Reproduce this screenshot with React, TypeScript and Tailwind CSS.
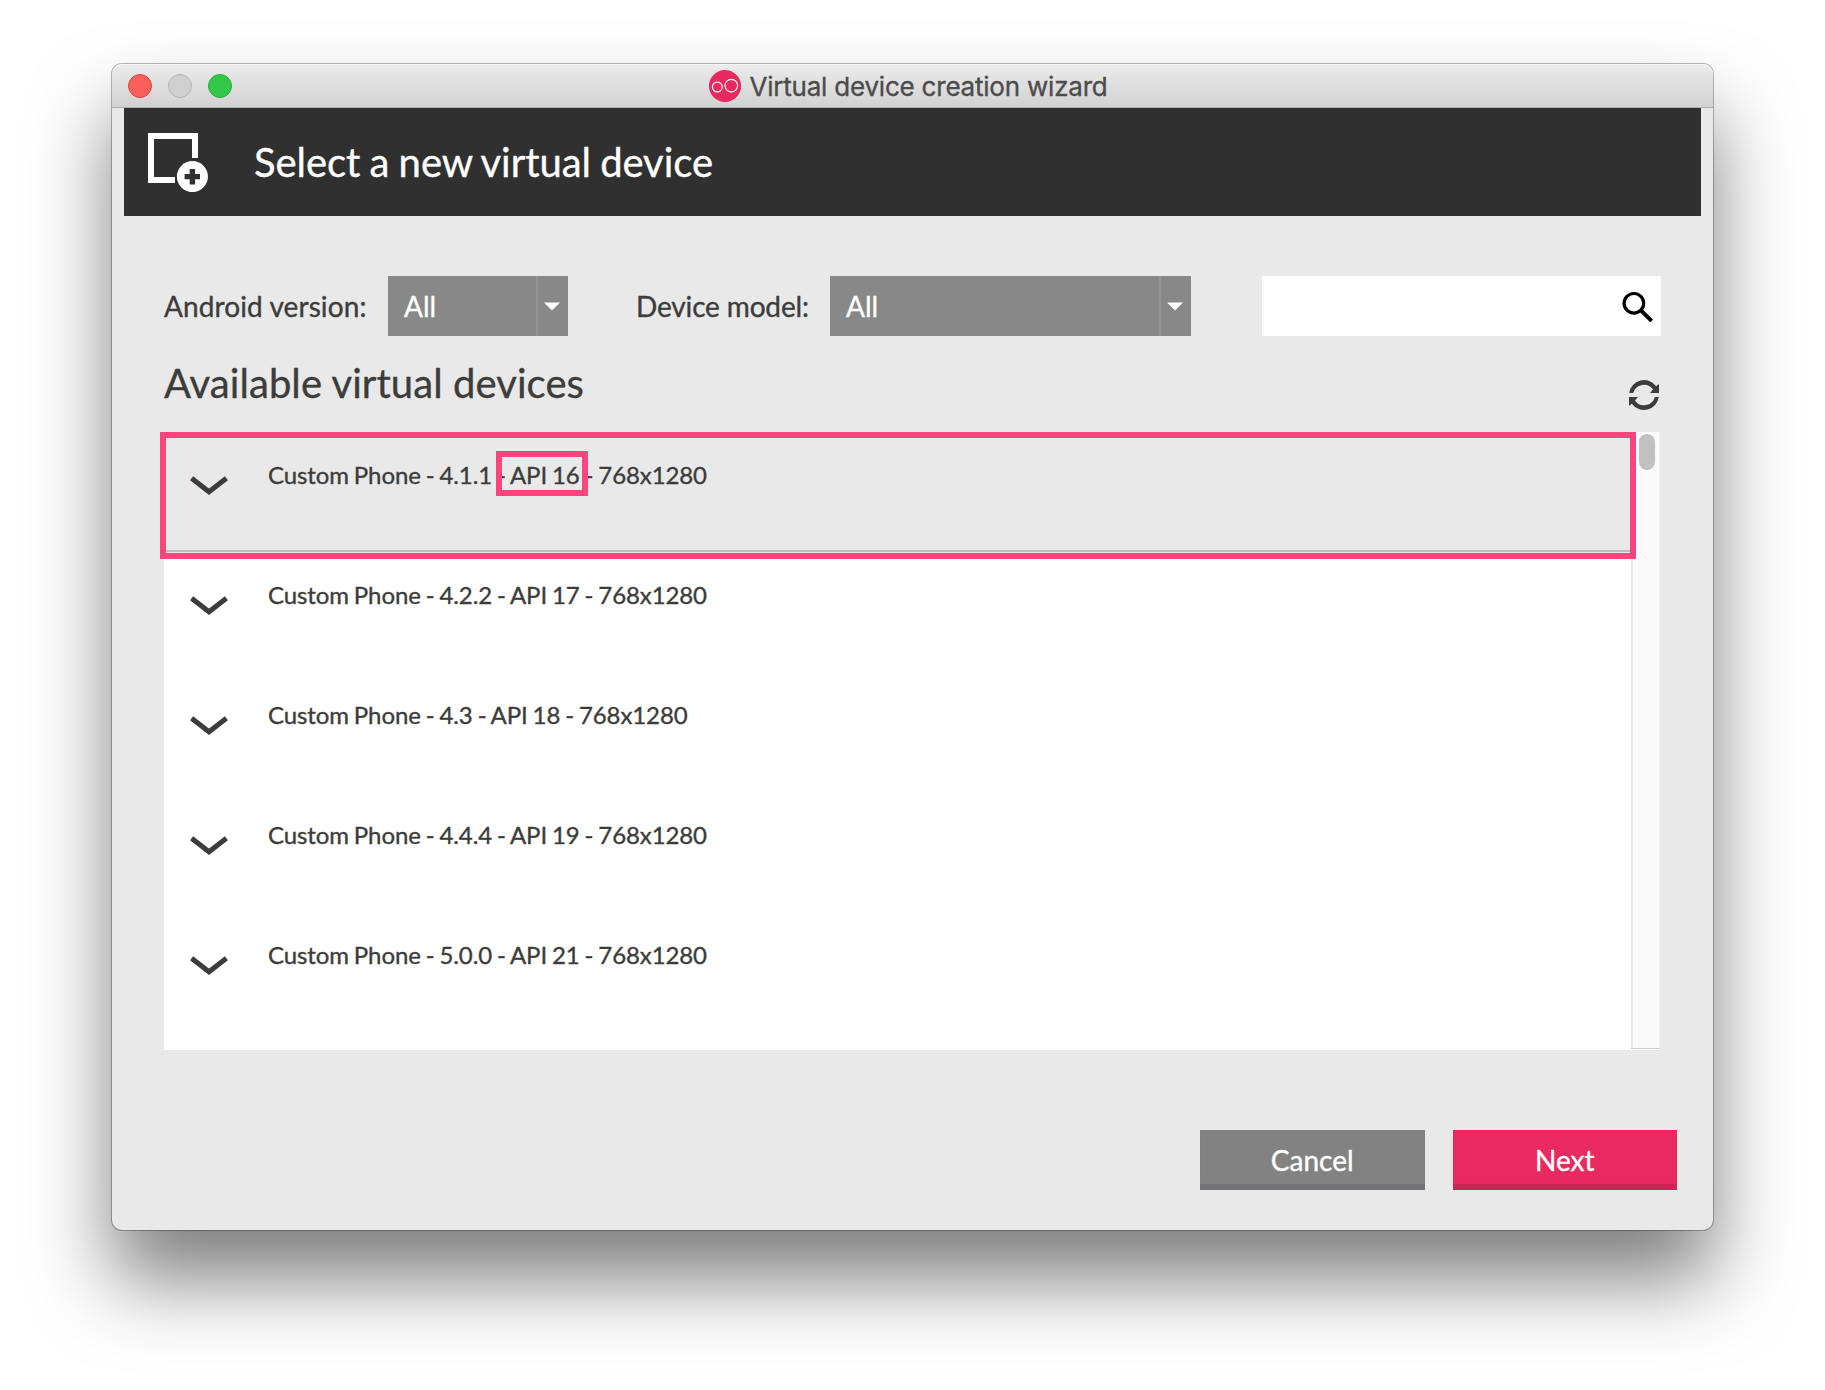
import React from "react";

const devices = [
  { version: "4.1.1", api: "API 16" },
  { version: "4.2.2", api: "API 17" },
  { version: "4.3", api: "API 18" },
  { version: "4.4.4", api: "API 19" },
  { version: "5.0.0", api: "API 21" },
];

function Chevron() {
  return (
    <svg className="mt-11 ml-[26px] h-[19px] w-[38px] shrink-0" viewBox="0 0 38 19" fill="none">
      <path d="M1.6 2.2 L19 15.8 L36.4 2.2" stroke="#3c3c3b" strokeWidth="5" />
    </svg>
  );
}

function Select({ width }: { width: string }) {
  return (
    <div className={`flex h-[60px] items-center bg-[#888888] ${width}`}>
      <span className="flex-1 pl-4 text-[28px] text-white">All</span>
      <div className="flex h-full w-8 items-center border-l-2 border-[#949496] pl-1.5">
        <svg className="h-[9px] w-4" viewBox="0 0 16 9">
          <path d="M0 0.5 H16 L8 8.5 Z" fill="#fff" />
        </svg>
      </div>
    </div>
  );
}

export default function App() {
  return (
    <div className="h-[1390px] w-[1825px] overflow-hidden bg-white pt-16 pl-28 font-['Lato',sans-serif] text-[#3c3c3b] [-webkit-text-stroke:0.35px]">
      <div className="flex h-[1166px] w-[1601px] flex-col rounded-[10px] bg-[#e9e9e9] shadow-[0_0_0_1px_rgba(0,0,0,0.28),0_50px_80px_rgba(0,0,0,0.5)]">
        <div className="relative flex h-11 items-center justify-center rounded-t-[10px] border-b border-[#aeaeae] bg-linear-to-b from-[#ececec] to-[#d2d2d2] pr-[7px] shadow-[inset_0_1px_0_#f6f6f6]">
          <div className="absolute left-4 flex gap-4">
            <span className="size-6 rounded-full border border-[#e0443e] bg-[#fc605c]" />
            <span className="size-6 rounded-full border border-[#b4b4b4] bg-[#d0d0d0]" />
            <span className="size-6 rounded-full border border-[#2aab3a] bg-[#34c84a]" />
          </div>
          <svg className="-ml-px size-8" viewBox="0 0 32 32" fill="none">
            <circle cx="16" cy="16" r="16" fill="#e6295f" />
            <circle cx="8.3" cy="17" r="4.9" stroke="#fff" strokeWidth="1.2" />
            <circle cx="22.3" cy="15.6" r="6.3" stroke="#fff" strokeWidth="1.2" />
          </svg>
          <span className="mt-0.5 ml-2 font-['Inter',sans-serif] text-[26px] tracking-[-0.21px] text-[#4c4c4c]">Virtual device creation wizard</span>
        </div>
        <header className="mx-3 flex h-[108px] shrink-0 items-center bg-[#303030] pl-6">
          <svg className="h-[60px] w-[60px]" viewBox="0 0 60 60" fill="none">
            <path d="M27 48 H3 V4 H47 V26" stroke="#fff" strokeWidth="6" />
            <circle cx="44.4" cy="44.6" r="17.5" fill="#303030" />
            <circle cx="44.4" cy="44.6" r="15.5" fill="#fff" />
            <path d="M44.4 37 V52.4 M36.6 44.6 H52" stroke="#303030" strokeWidth="5.4" />
          </svg>
          <h1 className="ml-[46px] text-[40px] leading-[48px] tracking-[-0.05px] text-white [word-spacing:-1px]">Select a new virtual device</h1>
        </header>
        <div className="mt-[60px] flex items-center pl-[52px] text-[28px]">
          <span className="w-[224px] tracking-[0.1px]">Android version:</span>
          <Select width="w-[180px]" />
          <span className="ml-[68px] w-[194px] tracking-[-0.15px]">Device model:</span>
          <Select width="w-[360.5px]" />
          <div className="ml-[71.5px] flex h-[60px] w-[399px] items-center justify-end bg-white pr-2">
            <svg className="h-[31px] w-[31px]" viewBox="0 0 31 31" fill="none">
              <circle cx="11.9" cy="12.3" r="9.8" stroke="#000" strokeWidth="3.2" />
              <path d="M19.200 19.6 L29.600 30" stroke="#000" strokeWidth="3.9" />
            </svg>
          </div>
        </div>
        <div className="flex h-24 justify-between pr-[54px] pl-[52px]">
          <h2 className="mt-[23px] text-[40px] leading-[48px] tracking-[0.07px]">Available virtual devices</h2>
          <svg className="mt-11 size-[30px]" viewBox="0 0 30 30" fill="#3c3c3b">
            <path d="M0.2 13 A15 15 0 0 1 27.2 6.2 L30 4 V13 H21 L24 9.6 A11 11 0 0 0 4.2 13 Z" />
            <path transform="rotate(180 15 15)" d="M0.2 13 A15 15 0 0 1 27.2 6.2 L30 4 V13 H21 L24 9.6 A11 11 0 0 0 4.2 13 Z" />
          </svg>
        </div>
        <div className="ml-[52px] flex h-[618px] w-[1496px] bg-white">
          <div className="w-[1467px]">
            {devices.map((d, i) => (
              <div key={d.api} className={`relative flex h-[120px] text-[24px] ${i === 0 ? "z-10" : ""}`}>
                {i === 0 && (
                  <div className="absolute top-0 -left-1 h-[126.5px] w-[1476px] border-[6px] border-[#fe447d] bg-[#e9e9e9] pt-[112px]">
                    <div className="h-0.5 bg-[#bdbdbd]" />
                  </div>
                )}
                <div className="relative flex">
                  <Chevron />
                  <span className="mt-7 ml-10 leading-[30px] tracking-[-0.1px] whitespace-pre [word-spacing:-1.1px]">
                    Custom Phone - {d.version} - {d.api} - 768x1280
                  </span>
                  {i === 0 && <div className="absolute top-[19px] left-[332px] h-[45px] w-[92px] border-[6px] border-[#fe447d]" />}
                </div>
              </div>
            ))}
          </div>
          <div className="flex w-[29px] flex-col bg-[#fafafa]">
            <div className="flex flex-1 border-r border-l-2 border-r-[#f2f2f2] border-l-[#e8e8e8] pt-0.5 pl-1.5">
              <div className="h-9 w-4 rounded-full bg-[#c1c1c1]" />
            </div>
            <div className="h-0.5 border-t border-[#d0d0d0] bg-white" />
          </div>
        </div>
        <div className="mt-20 flex justify-end gap-7 pr-9 text-[28px] text-white">
          <button className="h-[60px] w-[224.5px] bg-[#828282] shadow-[inset_0_-6px_1px_#747476]">Cancel</button>
          <button className="h-[60px] w-[224.5px] bg-[#e82a60] shadow-[inset_0_-6px_1px_#cb2455]">Next</button>
        </div>
      </div>
    </div>
  );
}
